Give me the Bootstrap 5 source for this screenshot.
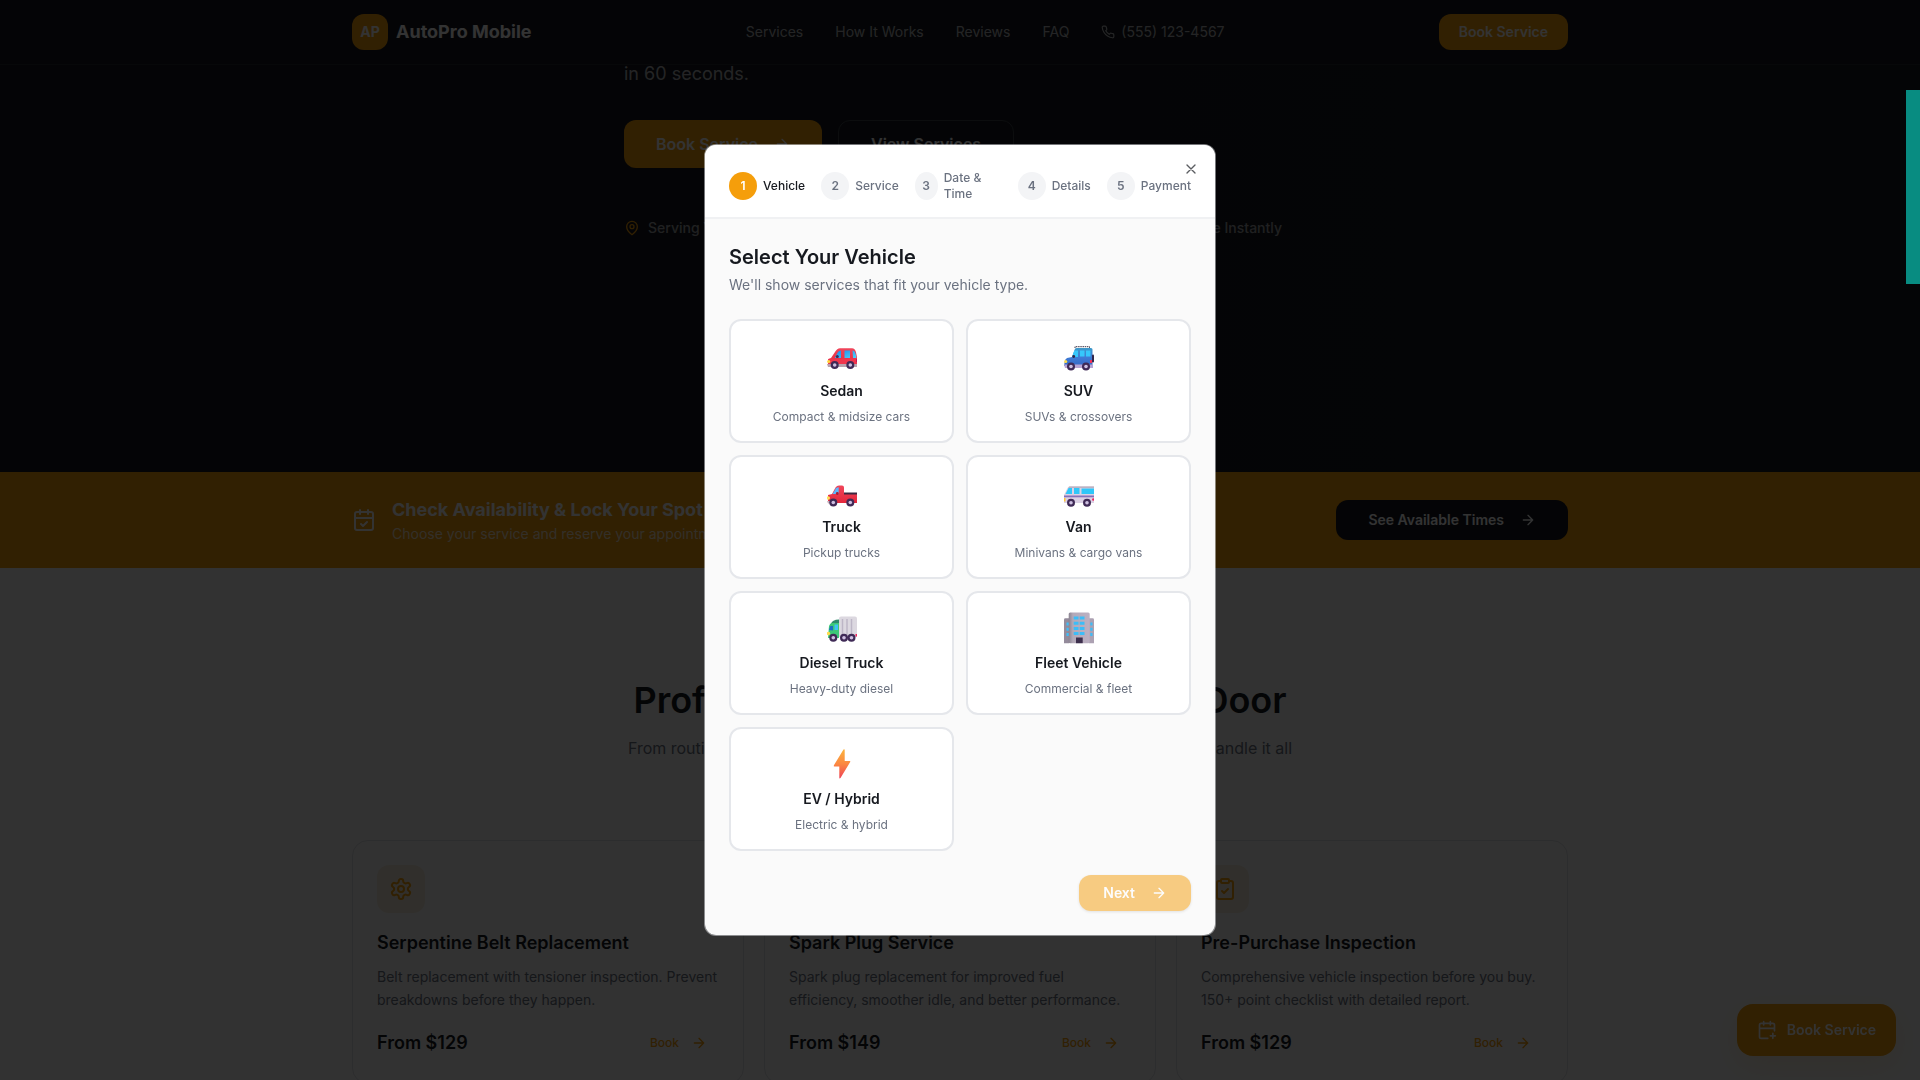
<!DOCTYPE html>
<html lang="en">
<head>
<meta charset="utf-8">
<meta name="viewport" content="width=device-width, initial-scale=1">
<title>AutoPro Mobile</title>
<link href="https://cdn.jsdelivr.net/npm/bootstrap@5.3.0/dist/css/bootstrap.min.css" rel="stylesheet">
<style>
:root{--amber:#f59e0b;--ink:#16191f;--muted:#6b7280;--line:#e5e7eb;--paper:#fafafa}
body{font-family:Inter,"Liberation Sans",sans-serif;font-size:14px;line-height:20px;color:var(--ink);background:var(--paper);overflow:hidden}
.wrap{max-width:1280px;padding:0 32px;margin:0 auto;width:100%}
.ico{fill:none;stroke:currentColor;stroke-width:2;stroke-linecap:round;stroke-linejoin:round;width:16px;height:16px;flex:none}
.ico-14{width:14px;height:14px}
.ico-20{width:20px;height:20px}
.ico-24{width:24px;height:24px}
.btn{--bs-btn-font-size:14px;--bs-btn-line-height:20px;--bs-btn-font-weight:600;--bs-btn-border-radius:12px;--bs-btn-border-width:0;gap:16px}
.btn-amber,.btn-amber:hover{background:var(--amber);color:#fff}
.btn-amber:disabled{background:var(--amber);color:#fff;opacity:.5;box-shadow:0 1px 3px rgba(0,0,0,.2)}
.btn-ink,.btn-ink:hover{background:#14181f;color:#fff}
.btn-head{padding:8px 20px}
.btn-times{padding:10px 32px}
.topbar{background:#14181f;border-bottom:1px solid #24282f;height:65px;color:#fff}
.logo-box{width:36px;height:36px;border-radius:12px;background:var(--amber);font-weight:700}
.brand-name{font-size:18px;font-weight:700;color:#fff}
.topbar .nav{gap:32px}
.topbar .nav-link{color:rgba(255,255,255,.7);font-weight:400;padding:0}
.tel{gap:6px}
.hero{background:linear-gradient(90deg,#14181f 60%,#181b20);padding-top:59px;height:472px}
.hero-in{max-width:672px;margin:0 auto}
.hero-copy{font-size:18px;line-height:29px;color:rgba(255,255,255,.7);margin-bottom:32px}
.btn-tall{--bs-btn-font-size:16px;height:48px;padding:0 32px}
.btn-ghost,.btn-ghost:hover{border:1px solid #3d4148;color:#fff}
.trust{max-width:658px;margin-top:50px;color:rgba(255,255,255,.6);font-weight:500}
.trust .ico{color:var(--amber)}
.avail{background:var(--amber);height:96px;color:#fff}
.avail h2{font-size:18px;line-height:28px;font-weight:700;margin:0}
.avail p{margin:0;color:rgba(255,255,255,.8)}
.svc-head{padding:108px 0 78px;text-align:center}
.svc-head h2{font-size:36px;line-height:48px;font-weight:600;margin:0 0 10px}
.svc-head p{font-size:16px;line-height:28px;color:var(--muted);margin:0}
.svc-grid{--bs-gutter-x:20px}
.svc{background:var(--paper);border:1px solid #dddfe3;border-radius:16px;padding:24px;height:244px}
.svc-ico{width:48px;height:48px;border-radius:12px;background:#f4ecda;color:var(--amber)}
.svc h3{font-size:18px;line-height:28px;font-weight:600;margin:16px 0 8px}
.svc p{line-height:23px;color:var(--muted);margin:0 0 18px}
.price{font-size:18px;line-height:28px;font-weight:600}
.svc a{color:var(--amber);font-size:12px;font-weight:500;text-decoration:none;padding:0 12px;gap:12px}
.fab{right:24px;bottom:24px;height:52px;padding:0 20px;border-radius:16px;gap:10px;box-shadow:0 10px 30px rgba(245,158,11,.15)}
.side-tab{right:0;top:90px;width:14px;height:194px;background:#088c81;z-index:1100}
.modal-backdrop{--bs-backdrop-opacity:.8}
.booking{max-width:512px}
.booking .modal-content{border:1px solid rgba(229,231,235,.5);border-radius:12px;background:var(--paper);overflow:hidden;background-clip:padding-box;--bs-modal-color:var(--ink)}
.steps{background:#fff;padding:25px 24px 15px;border-bottom:2px solid #f0f1f3;gap:16px;font-size:12px;line-height:16px;font-weight:500;color:var(--muted);margin:0;list-style:none}
.steps li{gap:6px}
.num{width:28px;height:28px;border-radius:50%;background:#f3f4f6;font-weight:600;flex:none}
.num-slim{width:23px}
.now{color:var(--ink)}
.now .num{background:var(--amber);color:#fff}
.x-btn{right:16px;top:16px;border:0;background:none;padding:0;color:var(--ink);opacity:.7;line-height:0}
.pick{padding:24px}
.pick h1{font-size:20px;line-height:28px;font-weight:600;margin:0 0 4px}
.pick-sub{color:var(--muted);margin:0 0 24px}
.pick-grid{display:grid;grid-template-columns:1fr 1fr;gap:12px;margin-bottom:24px}
.choice{background:#fff;border:2px solid var(--line);border-radius:12px;padding:16px;text-align:center;color:var(--ink)}
.choice svg{display:block;width:30px;height:36px;margin:0 auto 8px}
.choice b{display:block;font-weight:600;margin-bottom:8px}
.choice span{display:block;font-size:12px;line-height:16px;color:var(--muted)}
.pick .btn{height:36px;padding:0 24px}
</style>
</head>
<body>
<svg width="0" height="0" class="position-absolute" aria-hidden="true">
<defs>
<symbol id="arrow" viewBox="0 0 24 24"><path d="M5 12h14M12 5l7 7-7 7"/></symbol>
<symbol id="cal-check" viewBox="0 0 24 24"><path d="M8 2v4M16 2v4M3 10h18M9 16l2 2 4-4"/><rect x="3" y="4" width="18" height="18" rx="2"/></symbol>
<linearGradient id="glass" x1="0" y1="0" x2="1" y2="1"><stop stop-color="#1b8be8"/><stop offset="1" stop-color="#4fd0fb"/></linearGradient>
<linearGradient id="bolt" x1="0" y1="0" x2="0" y2="1"><stop stop-color="#fbb23c"/><stop offset=".5" stop-color="#fb8842"/><stop offset="1" stop-color="#ef4257"/></linearGradient>
<linearGradient id="red" x1="0" y1="0" x2="0" y2="1"><stop stop-color="#f0455a"/><stop offset="1" stop-color="#e3273c"/></linearGradient>
<linearGradient id="blue" x1="0" y1="0" x2="0" y2="1"><stop stop-color="#3d9ac9"/><stop offset=".5" stop-color="#3f7cd6"/><stop offset="1" stop-color="#3568c4"/></linearGradient>
<linearGradient id="tower" x1="0" y1="0" x2="1" y2="0"><stop stop-color="#8a8390"/><stop offset=".2" stop-color="#b3a9b8"/><stop offset="1" stop-color="#bcb0c2"/></linearGradient>
<g id="wheel"><circle r="4" fill="#3f2a56"/><circle r="1.800" fill="#cdbfe0"/></g>
</defs>
</svg>

<header class="topbar fixed-top">
 <div class="wrap d-flex justify-content-between align-items-center h-100">
  <a href="#" class="d-flex align-items-center gap-2 text-decoration-none text-white"><span class="logo-box d-flex align-items-center justify-content-center">AP</span><span class="brand-name">AutoPro Mobile</span></a>
  <nav class="nav align-items-center">
   <a class="nav-link" href="#">Services</a><a class="nav-link" href="#">How It Works</a><a class="nav-link" href="#">Reviews</a><a class="nav-link" href="#">FAQ</a>
   <a class="nav-link tel d-flex align-items-center" href="tel:5551234567"><svg class="ico ico-14" viewBox="0 0 24 24"><path d="M22 16.920v3a2 2 0 0 1-2.180 2 19.790 19.790 0 0 1-8.630-3.070 19.500 19.500 0 0 1-6-6 19.790 19.790 0 0 1-3.070-8.670A2 2 0 0 1 4.110 2h3a2 2 0 0 1 2 1.720 12.840 12.840 0 0 0 .7 2.810 2 2 0 0 1-.45 2.110L8.090 9.910a16 16 0 0 0 6 6l1.270-1.270a2 2 0 0 1 2.110-.45 12.840 12.840 0 0 0 2.810.7A2 2 0 0 1 22 16.920z"/></svg>(555) 123-4567</a>
  </nav>
  <button class="btn btn-amber btn-head">Book Service</button>
 </div>
</header>

<main>
<section class="hero">
 <div class="hero-in">
  <p class="hero-copy">in 60 seconds.</p>
  <div class="d-flex gap-3">
   <button class="btn btn-amber btn-tall d-flex align-items-center">Book Service <svg class="ico"><use href="#arrow"/></svg></button>
   <button class="btn btn-ghost btn-tall">View Services</button>
  </div>
  <div class="trust d-flex justify-content-between">
   <span class="d-flex align-items-center gap-2"><svg class="ico" viewBox="0 0 24 24"><path d="M20 10c0 6-8 12-8 12s-8-6-8-12a8 8 0 0 1 16 0Z"/><circle cx="12" cy="10" r="3"/></svg>Serving Your Area</span>
   <span>Schedule Online Instantly</span>
  </div>
 </div>
</section>

<section class="avail">
 <div class="wrap d-flex justify-content-between align-items-center h-100">
  <div class="d-flex align-items-center gap-3">
   <svg class="ico ico-24"><use href="#cal-check"/></svg>
   <div><h2>Check Availability &amp; Lock Your Spot</h2><p>Choose your service and reserve your appointment</p></div>
  </div>
  <button class="btn btn-ink btn-times d-flex align-items-center">See Available Times <svg class="ico"><use href="#arrow"/></svg></button>
 </div>
</section>

<section class="wrap">
 <div class="svc-head"><h2>Professional Car Service at Your Door</h2><p>From routine maintenance to complex repairs, our certified traveling experts handle it all</p></div>
 <div class="row svc-grid">
  <div class="col-4"><article class="svc">
   <div class="svc-ico d-flex align-items-center justify-content-center"><svg class="ico ico-24" viewBox="0 0 24 24"><path d="M12.22 2h-.44a2 2 0 0 0-2 2v.18a2 2 0 0 1-1 1.73l-.43.25a2 2 0 0 1-2 0l-.15-.08a2 2 0 0 0-2.73.73l-.22.38a2 2 0 0 0 .73 2.73l.15.1a2 2 0 0 1 1 1.72v.51a2 2 0 0 1-1 1.74l-.15.09a2 2 0 0 0-.73 2.73l.22.38a2 2 0 0 0 2.73.73l.15-.08a2 2 0 0 1 2 0l.43.25a2 2 0 0 1 1 1.73V20a2 2 0 0 0 2 2h.44a2 2 0 0 0 2-2v-.18a2 2 0 0 1 1-1.73l.43-.25a2 2 0 0 1 2 0l.15.08a2 2 0 0 0 2.73-.73l.22-.39a2 2 0 0 0-.73-2.73l-.15-.08a2 2 0 0 1-1-1.74v-.5a2 2 0 0 1 1-1.74l.15-.09a2 2 0 0 0 .73-2.73l-.22-.38a2 2 0 0 0-2.73-.73l-.15.08a2 2 0 0 1-2 0l-.43-.25a2 2 0 0 1-1-1.73V4a2 2 0 0 0-2-2z"/><circle cx="12" cy="12" r="3"/></svg></div>
   <h3>Serpentine Belt Replacement</h3><p>Belt replacement with tensioner inspection. Prevent breakdowns before they happen.</p>
   <div class="d-flex justify-content-between align-items-center"><span class="price">From $129</span><a href="#" class="d-flex align-items-center">Book <svg class="ico"><use href="#arrow"/></svg></a></div>
  </article></div>
  <div class="col-4"><article class="svc">
   <div class="svc-ico d-flex align-items-center justify-content-center"><svg class="ico ico-24" viewBox="0 0 24 24"><path d="M13 2 3 14h9l-1 8 10-12h-9z"/></svg></div>
   <h3>Spark Plug Service</h3><p>Spark plug replacement for improved fuel efficiency, smoother idle, and better performance.</p>
   <div class="d-flex justify-content-between align-items-center"><span class="price">From $149</span><a href="#" class="d-flex align-items-center">Book <svg class="ico"><use href="#arrow"/></svg></a></div>
  </article></div>
  <div class="col-4"><article class="svc">
   <div class="svc-ico d-flex align-items-center justify-content-center"><svg class="ico ico-24" viewBox="0 0 24 24"><rect x="8" y="2" width="8" height="4" rx="1"/><path d="M16 4h2a2 2 0 0 1 2 2v14a2 2 0 0 1-2 2H6a2 2 0 0 1-2-2V6a2 2 0 0 1 2-2h2M9 14l2 2 4-4"/></svg></div>
   <h3>Pre-Purchase Inspection</h3><p>Comprehensive vehicle inspection before you buy. 150+ point checklist with detailed report.</p>
   <div class="d-flex justify-content-between align-items-center"><span class="price">From $129</span><a href="#" class="d-flex align-items-center">Book <svg class="ico"><use href="#arrow"/></svg></a></div>
  </article></div>
 </div>
</section>
</main>

<button class="btn btn-amber fab position-fixed d-flex align-items-center"><svg class="ico ico-20" viewBox="0 0 24 24"><path d="M8 2v4M16 2v4M3 10h18M21 13V6a2 2 0 0 0-2-2H5a2 2 0 0 0-2 2v14a2 2 0 0 0 2 2h8M16 19h6M19 16v6"/></svg>Book Service</button>

<div class="modal-backdrop show"></div>
<div class="side-tab position-fixed"></div>

<div class="modal d-block" tabindex="-1" role="dialog" aria-modal="true" aria-labelledby="pick-title">
 <div class="modal-dialog modal-dialog-centered booking">
  <div class="modal-content">
   <ol class="steps d-flex align-items-center">
    <li class="now d-flex align-items-center"><span class="num d-flex align-items-center justify-content-center">1</span>Vehicle</li>
    <li class="d-flex align-items-center"><span class="num d-flex align-items-center justify-content-center">2</span>Service</li>
    <li class="d-flex align-items-center flex-fill"><span class="num num-slim d-flex align-items-center justify-content-center">3</span><span>Date &amp;<br>Time</span></li>
    <li class="d-flex align-items-center"><span class="num d-flex align-items-center justify-content-center">4</span>Details</li>
    <li class="d-flex align-items-center"><span class="num d-flex align-items-center justify-content-center">5</span>Payment</li>
   </ol>
   <button class="x-btn position-absolute" aria-label="Close"><svg class="ico" viewBox="0 0 24 24"><path d="M18 6 6 18M6 6l12 12"/></svg></button>
   <div class="pick">
    <h1 id="pick-title">Select Your Vehicle</h1>
    <p class="pick-sub">We'll show services that fit your vehicle type.</p>
    <div class="pick-grid">
     <button class="choice"><svg viewBox="0 0 30 36"><path d="M1 22.500Q1 21.500 4 21l4-6q2-3.800 5-3.800h12q3 0 4 4l1 5V29H1z" fill="url(#red)"/><path d="M0 27h30v3H1z" fill="#b9a3ae"/><path d="M1 22.500 30 21v6H1z" fill="#f0354d"/><path d="M8 20.500 11 15q1-1.500 3-1.500v7.500H8zM17.500 13.500h5.500V21h-5.500zM25.500 13.500q2.500 0 3.300 4l.7 3.500h-3.500z" fill="url(#glass)"/><circle cx="1.700" cy="24.500" r="1.600" fill="#ffd83a"/><circle cx="10.300" cy="19.500" r="1.500" fill="#3f2a56"/><path d="M29 22h1v3h-1z" fill="#c2185b"/><use href="#wheel" x="7.700" y="28"/><use href="#wheel" x="23.300" y="28"/></svg><b>Sedan</b><span>Compact &amp; midsize cars</span></button>
     <button class="choice"><svg viewBox="0 0 30 36"><path d="M11 11V9.700h14.500V11" fill="none" stroke="#3b3347" stroke-width="1" stroke-dasharray="1.500 .7"/><path d="M1 23l2-2 5-1 3-8.200q.4-.8 2-.8h14q1.500 0 1.500 1.500V29H0z" fill="url(#blue)"/><path d="M8 20l2.300-6.500H14V20zM16 13.500h4.500v6H16zM22 13.500h4.500v6H22z" fill="#36c8fb"/><rect x="28" y="17.500" width="2" height="8" rx="1" fill="#31264a"/><path d="M0 27.500h29v3.500H1z" fill="#b7a3d3"/><circle cx="1.700" cy="24.500" r="1.600" fill="#ffdc4c"/><path d="M26 23h2v3h-2z" fill="#f0315a"/><circle cx="9.700" cy="19.500" r="1.400" fill="#2f2648"/><use href="#wheel" x="7" y="29.500"/><use href="#wheel" x="22" y="29.500"/></svg><b>SUV</b><span>SUVs &amp; crossovers</span></button>
     <button class="choice"><svg viewBox="0 0 30 36"><path d="M1 22l4-1 3.500-6.500q1.300-2 3.500-2h3q2 0 2 2V21h13v9H1z" fill="url(#red)"/><path d="M17 19.500h13v2H17z" fill="#3b2740"/><path d="M5.500 21 9 15.300q.8-1 2.700-1V21z" fill="#5cb8ff"/><circle cx="10.300" cy="20.500" r="1.400" fill="#a81e35"/><circle cx="1.300" cy="25" r="1.700" fill="#ffe25a"/><path d="M0 28h4v2.500H1z" fill="#c9b3c0"/><use href="#wheel" x="6.300" y="29.500"/><use href="#wheel" x="23.300" y="29.500"/></svg><b>Truck</b><span>Pickup trucks</span></button>
     <button class="choice"><svg viewBox="0 0 30 36"><path d="M0 22l3.500-7q.7-1.500 2.500-1.500h24V30H0z" fill="#dbd0e4"/><path d="M5 13.500h25v1.200H4.300z" fill="#b3a9b8"/><path d="M1.500 21l3-6H8v6zM10 15h5.500v6H10zM17.500 15.500H30V21H17.500z" fill="#2fc7f9"/><path d="M0 22.500h30v1.800H0z" fill="#8570ba"/><path d="M0 25h1.500v3.500H0z" fill="#ffc53a"/><circle cx="29.300" cy="26.500" r="1.200" fill="#f0215a"/><use href="#wheel" x="7" y="29.700"/><use href="#wheel" x="23" y="29.700"/></svg><b>Van</b><span>Minivans &amp; cargo vans</span></button>
     <button class="choice"><svg viewBox="0 0 30 36"><path d="M12 9.500q0-2 2-2h14q2 0 2 2V28H12z" fill="#dcd8e0"/><path d="M15.500 10v16M20 10v16M24.500 10v16" stroke="#bdb6c6" stroke-width="1.500"/><path d="M4 15q1-4.500 8-4.500V15z" fill="#2c8a6c"/><path d="M2 17q1-3 3-3h7v15H1z" fill="#3cc878"/><path d="M2 21l1.300-4H6v4.500z" fill="#1c6fc0"/><path d="M7.500 15.500h3.500V21H7.500z" fill="#3ec5f5"/><circle cx="1.500" cy="24.500" r="1.700" fill="#ffdc4c"/><path d="M28.500 25H30v2.500h-1.500z" fill="#f0215a"/><use href="#wheel" x="6.300" y="28.700"/><use href="#wheel" x="17" y="28.700"/><use href="#wheel" x="24.500" y="28.700"/></svg><b>Diesel Truck</b><span>Heavy-duty diesel</span></button>
     <button class="choice"><svg viewBox="0 0 30 36"><path d="M0 10.500Q0 9.200 1.500 9.200H5v25H0z" fill="#948b9b"/><path d="M25 9.200h3.500q1.500 0 1.500 1.300v23.700h-5z" fill="#aca1b2"/><rect x="4.700" y="3.500" width="21" height="30.700" rx="1.500" fill="url(#tower)"/><path d="M9.700 7.500h4.800v3H9.700zM15.700 7.500h4.800v3h-4.800zM9.700 12.700h4.800v3H9.700zM15.700 12.700h4.800v3h-4.800zM9.700 17.900h4.800v3H9.700zM15.700 17.900h4.800v3h-4.800zM9.700 23.100h4.800v3H9.700zM15.700 23.100h4.800v3h-4.800zM2.500 13.500H4.700v3H2.500zM2.500 18.700H4.700v3H2.500zM2.500 24H4.700v3H2.500zM26.300 13.500h2.200v3h-2.200zM26.300 18.700h2.200v3h-2.200zM26.300 24h2.200v3h-2.200z" fill="#3dbdf8"/><path d="M12 28.500h6.700v5.700H12z" fill="#3d2f4d"/></svg><b>Fleet Vehicle</b><span>Commercial &amp; fleet</span></button>
     <button class="choice"><svg viewBox="0 0 30 36"><path d="M16.500 4.500q1.200-.5 1.200.5v11h5q1 0 .5 1L13.500 33q-1.200 1.200-1.200-.5V21.500H7.500q-1.200 0-.6-1.200z" fill="url(#bolt)"/></svg><b>EV / Hybrid</b><span>Electric &amp; hybrid</span></button>
    </div>
    <div class="d-flex justify-content-end"><button class="btn btn-amber d-flex align-items-center" disabled>Next <svg class="ico"><use href="#arrow"/></svg></button></div>
   </div>
  </div>
 </div>
</div>
<script src="https://cdn.jsdelivr.net/npm/bootstrap@5.3.0/dist/js/bootstrap.bundle.min.js"></script>
</body>
</html>
